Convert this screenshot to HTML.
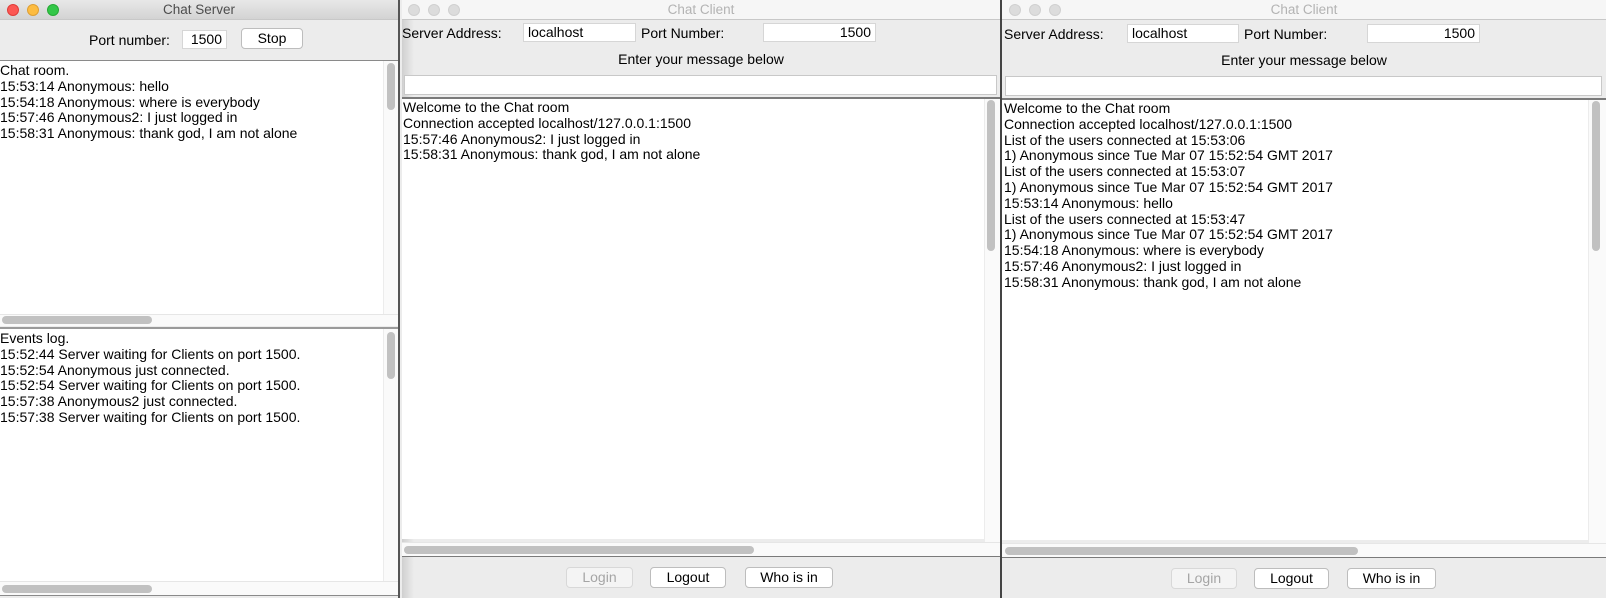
<!DOCTYPE html>
<html><head><meta charset="utf-8"><style>
*{margin:0;padding:0;box-sizing:border-box}
body{width:1606px;height:598px;overflow:hidden;background:#ececec;font-family:"Liberation Sans",sans-serif;font-size:14px;color:#000;position:relative}
.a{position:absolute}
.tb{position:absolute;top:0;height:20px;border-bottom:1px solid #c8c8c8;text-align:center;line-height:20px;font-size:13.5px}
.dot{position:absolute;top:4px;width:12px;height:12px;border-radius:50%}
.fld{position:absolute;background:#fff;border:1px solid #d6d6d6;height:19px;line-height:17px;padding:0 4px}
.btn{position:absolute;background:#fff;border:1px solid #bdbdbd;border-radius:4px;height:21px;line-height:19px;text-align:center}
.ta{position:absolute;background:#fff;line-height:15.8px;white-space:pre;overflow:hidden}
.vs{position:absolute;width:8px;background:#c1c1c1;border-radius:4px}
.hs{position:absolute;height:8px;background:#c1c1c1;border-radius:4px}
.strip{position:absolute;background:#fafafa}
</style></head><body>

<!-- SERVER -->
<div class="a" style="left:0;top:0;width:400px;height:598px;background:#ececec;border-right:2px solid #555"></div>
<div class="tb" style="left:0;width:398px;background:linear-gradient(#e8e8e8,#d3d3d3);color:#4d4d4d">Chat Server</div>
<div class="dot" style="left:7px;background:#fc5753;border:1px solid #df3d3a"></div>
<div class="dot" style="left:27px;background:#fdbc40;border:1px solid #de9f34"></div>
<div class="dot" style="left:47px;background:#33c748;border:1px solid #27aa35"></div>
<div class="a" style="left:89px;top:32px">Port number:</div>
<div class="fld" style="left:182px;top:30px;width:45px;text-align:right">1500</div>
<div class="btn" style="left:241px;top:28px;width:62px">Stop</div>
<div class="a" style="left:0;top:60px;width:398px;height:1px;background:#8a8a8a"></div>
<div class="ta" style="left:0;top:61px;width:383px;height:254px;padding-top:2px">Chat room.
15:53:14 Anonymous: hello
15:54:18 Anonymous: where is everybody
15:57:46 Anonymous2: I just logged in
15:58:31 Anonymous: thank god, I am not alone</div>
<div class="strip" style="left:383px;top:61px;width:15px;height:254px;border-left:1px solid #ececec"></div>
<div class="vs" style="left:387px;top:63px;height:47px"></div>
<div class="strip" style="left:0;top:314px;width:398px;height:12px;border-top:1px solid #e6e6e6"></div>
<div class="hs" style="left:2px;top:316px;width:150px"></div>
<div class="a" style="left:0;top:327px;width:398px;height:2px;background:#9a9a9a"></div>
<div class="ta" style="left:0;top:329px;width:383px;height:254px;padding-top:2px">Events log.
15:52:44 Server waiting for Clients on port 1500.
15:52:54 Anonymous just connected.
15:52:54 Server waiting for Clients on port 1500.
15:57:38 Anonymous2 just connected.
15:57:38 Server waiting for Clients on port 1500.</div>
<div class="strip" style="left:383px;top:329px;width:15px;height:254px;border-left:1px solid #ececec"></div>
<div class="vs" style="left:387px;top:332px;height:47px"></div>
<div class="strip" style="left:0;top:581px;width:398px;height:14px;border-top:1px solid #e6e6e6"></div>
<div class="hs" style="left:2px;top:585px;width:150px"></div>
<div class="a" style="left:0;top:595px;width:398px;height:1px;background:#8a8a8a"></div>

<!-- CLIENT 1 -->
<div class="a" style="left:402px;top:0;width:598px;height:598px;background:#ececec"></div>
<div class="a" style="left:402px;top:0;width:12px;height:598px;background:linear-gradient(90deg,rgba(0,0,0,.12),rgba(0,0,0,0))"></div>
<div class="tb" style="left:402px;width:598px;background:#f6f6f6;color:#b3b3b3">Chat Client</div>
<div class="dot" style="left:408px;background:#dcdcdc;border:1px solid #d0d0d0"></div>
<div class="dot" style="left:428px;background:#dcdcdc;border:1px solid #d0d0d0"></div>
<div class="dot" style="left:448px;background:#dcdcdc;border:1px solid #d0d0d0"></div>
<div class="a" style="left:402px;top:25px">Server Address:</div>
<div class="fld" style="left:523px;top:23px;width:113px">localhost</div>
<div class="a" style="left:641px;top:25px">Port Number:</div>
<div class="fld" style="left:763px;top:23px;width:113px;text-align:right">1500</div>
<div class="a" style="left:402px;top:51px;width:598px;text-align:center">Enter your message below</div>
<div class="fld" style="left:404px;top:75px;width:593px;height:20px;border-color:#c8c8c8"></div>
<div class="a" style="left:402px;top:97px;width:598px;height:2px;background:#7a7a7a"></div>
<div class="ta" style="left:402px;top:99px;width:584px;height:440px;padding-left:1px;padding-top:1px">Welcome to the Chat room
Connection accepted localhost/127.0.0.1:1500
15:57:46 Anonymous2: I just logged in
15:58:31 Anonymous: thank god, I am not alone</div>
<div class="strip" style="left:984px;top:99px;width:16px;height:445px;border-left:1px solid #ececec"></div>
<div class="vs" style="left:987px;top:100px;height:151px"></div>
<div class="strip" style="left:402px;top:542px;width:598px;height:14px;border-top:1px solid #e6e6e6"></div>
<div class="hs" style="left:404px;top:546px;width:350px"></div>
<div class="a" style="left:402px;top:556px;width:598px;height:1px;background:#7a7a7a"></div>
<div class="btn" style="left:566px;top:567px;width:67px;color:#a5a5a5;border-color:#d8d8d8;background:#f4f4f4">Login</div>
<div class="btn" style="left:650px;top:567px;width:76px">Logout</div>
<div class="btn" style="left:745px;top:567px;width:88px">Who is in</div>

<!-- CLIENT 2 -->
<div class="a" style="left:1000px;top:0;width:2px;height:598px;background:#444"></div>
<div class="a" style="left:1002px;top:0;width:604px;height:598px;background:#ececec"></div>
<div class="tb" style="left:1002px;width:604px;background:#f6f6f6;color:#b3b3b3">Chat Client</div>
<div class="dot" style="left:1009px;background:#dcdcdc;border:1px solid #d0d0d0"></div>
<div class="dot" style="left:1029px;background:#dcdcdc;border:1px solid #d0d0d0"></div>
<div class="dot" style="left:1049px;background:#dcdcdc;border:1px solid #d0d0d0"></div>
<div class="a" style="left:1004px;top:26px">Server Address:</div>
<div class="fld" style="left:1127px;top:24px;width:112px">localhost</div>
<div class="a" style="left:1244px;top:26px">Port Number:</div>
<div class="fld" style="left:1367px;top:24px;width:113px;text-align:right">1500</div>
<div class="a" style="left:1002px;top:52px;width:604px;text-align:center">Enter your message below</div>
<div class="fld" style="left:1005px;top:76px;width:597px;height:20px;border-color:#c8c8c8"></div>
<div class="a" style="left:1002px;top:98px;width:604px;height:2px;background:#7a7a7a"></div>
<div class="ta" style="left:1002px;top:100px;width:586px;height:440px;padding-left:2px;padding-top:1px">Welcome to the Chat room
Connection accepted localhost/127.0.0.1:1500
List of the users connected at 15:53:06
1) Anonymous since Tue Mar 07 15:52:54 GMT 2017
List of the users connected at 15:53:07
1) Anonymous since Tue Mar 07 15:52:54 GMT 2017
15:53:14 Anonymous: hello
List of the users connected at 15:53:47
1) Anonymous since Tue Mar 07 15:52:54 GMT 2017
15:54:18 Anonymous: where is everybody
15:57:46 Anonymous2: I just logged in
15:58:31 Anonymous: thank god, I am not alone</div>
<div class="strip" style="left:1588px;top:100px;width:18px;height:444px;border-left:1px solid #ececec"></div>
<div class="vs" style="left:1592px;top:101px;height:150px"></div>
<div class="strip" style="left:1002px;top:543px;width:604px;height:14px;border-top:1px solid #e6e6e6"></div>
<div class="hs" style="left:1005px;top:547px;width:353px"></div>
<div class="a" style="left:1002px;top:557px;width:604px;height:1px;background:#7a7a7a"></div>
<div class="btn" style="left:1171px;top:568px;width:66px;color:#a5a5a5;border-color:#d8d8d8;background:#f4f4f4">Login</div>
<div class="btn" style="left:1254px;top:568px;width:75px">Logout</div>
<div class="btn" style="left:1347px;top:568px;width:89px">Who is in</div>
</body></html>
